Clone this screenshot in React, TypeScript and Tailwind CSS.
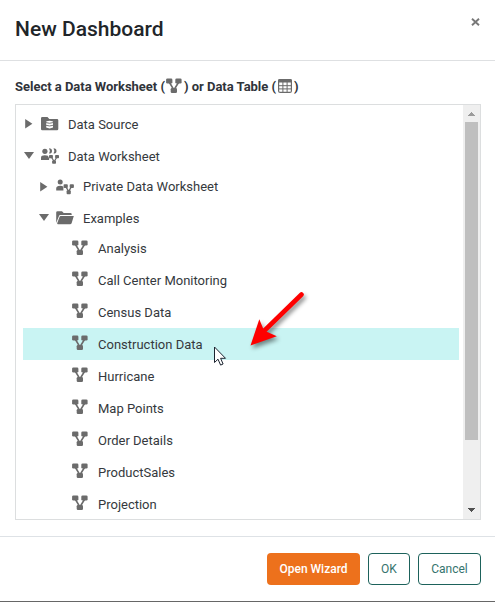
import React from "react";

const GRAY = "#6b6b6b";

function WorksheetIcon({ className = "" }: { className?: string }) {
  return (
    <svg width="16" height="16" viewBox="0 0 16 16" fill={GRAY} className={"shrink-0 " + className}>
      <path d="M3.2 4 7.9 12 12.8 4" fill="none" stroke={GRAY} strokeWidth="1.6" />
      <rect x="0.100" y="0.4" width="6.300" height="5.200" rx="1.3" />
      <rect x="9.300" y="0.4" width="6.300" height="5.200" rx="1.3" />
      <rect x="4.700" y="9.900" width="6.300" height="5.200" rx="1.3" />
    </svg>
  );
}

function TableIcon() {
  return (
    <svg width="14" height="14" viewBox="0 0 14 14" className="shrink-0">
      <rect x="0.6" y="0.6" width="12.8" height="12.8" rx="1.5" fill="none" stroke={GRAY} strokeWidth="1.2" />
      <path d="M0 3.400V1.500Q0 0 1.500 0h11Q14 0 14 1.500v1.900z" fill={GRAY} />
      <path d="M4.900 3v10.500M9.100 3v10.500M.5 6.700h13M.5 9.900h13" fill="none" stroke={GRAY} strokeWidth="1" />
    </svg>
  );
}

function DataSourceIcon() {
  return (
    <svg width="18" height="16" viewBox="0 0 18 16" className="shrink-0">
      <path d="M0 2.300Q0 1 1.300 1H6.500L8.300 3H16Q17.300 3 17.300 4.300V13Q17.300 14.300 16 14.300H1.300Q0 14.300 0 13z" fill={GRAY} />
      <path d="M5.200 5.600q3.400-1.600 6.800 0v6q-3.400 1.600-6.800 0z" fill="#fff" />
      <path d="M5 6.600q3.500 1.300 7 0M5 9.300q3.500 1.300 7 0" fill="none" stroke={GRAY} strokeWidth=".9" />
    </svg>
  );
}

function SharedIcon() {
  return (
    <svg width="18" height="16" viewBox="0 0 18 16" fill={GRAY} className="shrink-0">
      <circle cx="3.900" cy="3.300" r="2.600" />
      <path d="M0 12v-2.500Q0 7.200 3.900 7.200q1.800 0 3 .6l1.200 2.400V12z" />
      <path d="M8 .2q3 0 3 2.700T8 5.600Q9.800 2.900 8 .2zM12.500.2q3 0 3 2.700t-3 2.700q1.800-2.700 0-5.400z" />
      <path d="m10 8.500 3.200 5 3-5" fill="none" stroke={GRAY} strokeWidth="1.200" />
      <rect x="8" y="7" width="3.900" height="3.300" rx=".8" />
      <rect x="14.100" y="7" width="3.900" height="3.300" rx=".8" />
      <rect x="11.100" y="12.400" width="3.900" height="3.300" rx=".8" />
    </svg>
  );
}

function PrivateIcon() {
  return (
    <svg width="18" height="16" viewBox="0 0 18 16" fill={GRAY} className="shrink-0">
      <circle cx="4.200" cy="3" r="2.500" />
      <path d="M.2 11.500V9.400Q.2 6.800 4.200 6.800q2 0 3.200 1v3.700z" />
      <path d="m9.500 7 3.200 5.500 3-5.500" fill="none" stroke={GRAY} strokeWidth="1.400" />
      <rect x="7.600" y="5.200" width="4.200" height="3.800" rx=".9" />
      <rect x="13.700" y="5.200" width="4.200" height="3.800" rx=".9" />
      <rect x="10.600" y="11.300" width="4.200" height="3.900" rx=".9" />
    </svg>
  );
}

function FolderOpenIcon() {
  return (
    <svg width="18" height="16" viewBox="0 0 18 16" fill={GRAY} className="shrink-0">
      <path d="M.2 13V2.500Q.2 1.200 1.500 1.200H6L7.700 3h6.800q1.200 0 1.200 1.200v.9H4.200Q3.300 5.100 3 6z" />
      <path d="M4.700 6.100h13.100l-2.100 6.900q-.4 1.300-1.700 1.300H2q-1 0-.8-1L3.500 7q.3-.9 1.200-.9z" />
    </svg>
  );
}

function Caret({ open }: { open: boolean }) {
  return (
    <svg width="10" height="10" viewBox="0 0 10 10" fill={GRAY} className="shrink-0">
      {open ? <path d="M0 1h10L5 8z" /> : <path d="M1.200 0v9.400L8.400 4.700z" />}
    </svg>
  );
}

const sheets = [
  { name: "Analysis", row: "h-[30px]", text: "" },
  { name: "Call Center Monitoring", row: "h-8", text: "pt-[2px]" },
  { name: "Census Data", row: "h-8", text: "pt-[2px]" },
  { name: "Construction Data", row: "h-8 bg-[#c9f4f3]", text: "pt-[2px]" },
  { name: "Hurricane", row: "h-8", text: "pt-[2px]" },
  { name: "Map Points", row: "h-8", text: "pt-[2px]" },
  { name: "Order Details", row: "h-8", text: "pt-[2px]" },
  { name: "ProductSales", row: "h-8", text: "pt-[2px]" },
  { name: "Projection", row: "h-8", text: "pt-[2px]" },
];

interface BranchProps {
  icon: React.ReactNode;
  label: string;
  open: boolean;
  className: string;
  textClass?: string;
}

function Branch({ icon, label, open, className, textClass = "pt-[2px]" }: BranchProps) {
  return (
    <div className={"flex shrink-0 items-center " + className}>
      <Caret open={open} />
      <span className="ml-[7px] flex w-[27px] pb-px">{icon}</span>
      <span className={textClass}>{label}</span>
    </div>
  );
}

export default function App() {
  return (
    <div className="relative flex h-[602px] w-[495px] flex-col overflow-hidden border-b border-[#666] bg-white font-['Roboto',sans-serif] text-[13px] text-[#35393d]">
      <header className="flex h-[61px] shrink-0 justify-between border-b border-[#dee0e2] pl-[15px] pr-[15px]">
        <h1 className="pt-[14px] text-[21px] leading-[30px] font-medium text-[#212529]">New Dashboard</h1>
        <svg width="9" height="8" viewBox="0 0 9 8" className="mt-[18px]">
          <path d="m1 .8 7 6.400M8 .8 1 7.200" stroke="#777" strokeWidth="1.900" />
        </svg>
      </header>

      <main className="flex h-[475px] shrink-0 flex-col px-[15px] pr-[14px]">
        <div className="flex h-[43px] shrink-0 items-center pt-[8px] font-bold tracking-[-0.02px] text-[#30343a]">
          <span>Select a Data Worksheet (</span>
          <WorksheetIcon className="mr-[2px] ml-px mb-px" />
          <span className="whitespace-pre">) or Data Table (</span>
          <span className="mx-[2px] mb-px"><TableIcon /></span>
          <span>)</span>
        </div>

        <div className="flex h-[416px] border border-[#dcdedf]">
          <div className="flex min-w-0 flex-1 flex-col overflow-hidden pt-[3px] pr-1 pl-[7px]">
            <Branch icon={<DataSourceIcon />} label="Data Source" open={false} className="h-8 pl-px" />
            <Branch icon={<SharedIcon />} label="Data Worksheet" open className="h-8 pl-px" />
            <Branch icon={<PrivateIcon />} label="Private Data Worksheet" open={false} className="h-[30px] pl-4" textClass="" />
            <Branch icon={<FolderOpenIcon />} label="Examples" open className="h-8 pl-4" />
            {sheets.map((s) => (
              <div key={s.name} className={"flex shrink-0 items-center pl-[49px] " + s.row}>
                <WorksheetIcon className="mr-[10px] mb-[3px]" />
                <span className={s.text}>{s.name}</span>
              </div>
            ))}
          </div>
          <div className="flex w-[17px] flex-col items-center bg-[#efefef]">
            <svg width="17" height="17" viewBox="0 0 17 17" shapeRendering="crispEdges">
              <path d="M5 11h7L8.500 7.300z" fill="#9b9b9b" />
            </svg>
            <div className="h-[318px] w-[13px] bg-[#bfbfbf]" />
            <svg width="17" height="17" viewBox="0 0 17 17" className="mt-auto" shapeRendering="crispEdges">
              <path d="M5 6h7L8.500 9.700z" fill="#505050" />
            </svg>
          </div>
        </div>
      </main>

      <footer className="flex flex-1 justify-end gap-2 border-t border-[#dee2e6] pt-4 pr-[14px] text-[12px]">
        <button className="h-8 w-[93px] rounded-[4px] bg-[#ed711c] font-medium text-white">Open Wizard</button>
        <button className="h-8 w-[42px] rounded-[4px] border border-[#1d625b] text-[#35746e]">OK</button>
        <button className="h-8 w-[63px] rounded-[4px] border border-[#1d625b] text-[#35746e]">Cancel</button>
      </footer>

      <svg width="62" height="64" viewBox="0 0 62 64" className="absolute top-[288px] left-[248px] drop-shadow-[2px_3px_2px_rgba(0,0,0,0.45)]">
        <path d="M53.500 6.500 15 44" stroke="#fe0000" strokeWidth="4.600" strokeLinecap="round" />
        <path d="M2.500 57.500 11.300 31.300 16 42.500 28.800 48.300z" fill="#fe0000" />
      </svg>
      <svg width="14" height="21" viewBox="0 0 14 21" className="absolute top-[346px] left-[214px]">
        <path d="M.5 1v15.500l3.500-3.300 2.600 5.900 2.500-1.100-2.500-5.700h4.900z" fill="#fff" stroke="#1c2430" strokeWidth="1" />
      </svg>
    </div>
  );
}
